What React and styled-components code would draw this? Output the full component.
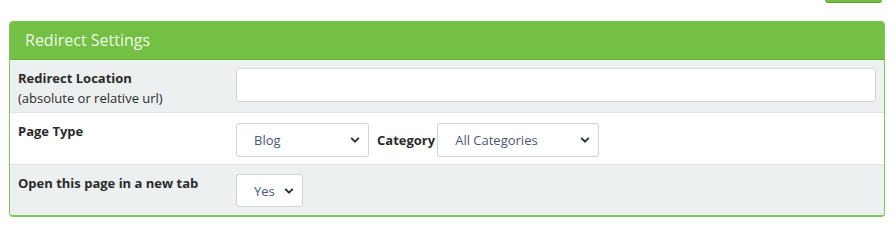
import React, { useState } from 'react';
import styled, { createGlobalStyle } from 'styled-components';

const GlobalStyle = createGlobalStyle`
  body {
    margin: 0;
    background: #fff;
    font-family: 'Open Sans', 'Liberation Sans', sans-serif;
  }
`;

const Page = styled.div`
  width: 893px;
`;

const TopBar = styled.div`
  display: flex;
  justify-content: flex-end;
  padding-right: 11px;
  height: 3px;
  overflow: hidden;
`;

const SaveStub = styled.div`
  width: 57px;
  height: 3px;
  background: #74c044;
  border-bottom: 1px solid #5fa334;
  border-radius: 0 0 3px 3px;
  box-sizing: border-box;
`;

const Panel = styled.div`
  margin: 18px 8px 0 9px;
  border: 1px solid #7cc95a;
  border-bottom-width: 2px;
  border-radius: 4px;
  overflow: hidden;
`;

const PanelHeader = styled.div`
  background: #74c044;
  color: #eef8e8;
  font-size: 16px;
  height: 37px;
  line-height: 37px;
  padding-left: 15px;
  border-bottom: 1px solid #66ae3a;
`;

const Row = styled.div`
  display: grid;
  grid-template-columns: 218px 1fr;
  align-items: start;
  padding: ${(p) => p.$pad};
  height: ${(p) => p.$height}px;
  box-sizing: border-box;
  background: ${(p) => (p.$shaded ? '#ecf0f1' : '#fff')};
  border-bottom: ${(p) => (p.$last ? 'none' : '1px solid #dfe3e5')};
`;

const Label = styled.div`
  font-size: 13px;
  line-height: 19px;
  color: #2b2b2b;
  font-weight: 700;
  padding-top: ${(p) => p.$top || 0}px;

  small {
    display: block;
    font-weight: 400;
    font-size: 13px;
    line-height: 20px;
  }
`;

const TextInput = styled.input`
  box-sizing: border-box;
  width: 100%;
  height: 34px;
  border: 1px solid #cfd4d6;
  border-radius: 3px;
  background: #fff;
  outline: none;
  font: inherit;
  font-size: 13px;
  padding: 0 10px;
`;

const Fields = styled.div`
  display: flex;
  align-items: center;
  gap: 4px;
  margin-top: ${(p) => p.$top || 0}px;
`;

const SelectWrap = styled.div`
  position: relative;
  width: ${(p) => p.$width}px;
  height: ${(p) => p.$height || 34}px;

  svg {
    position: absolute;
    right: 9px;
    top: 50%;
    transform: translateY(-50%);
    pointer-events: none;
  }
`;

const Select = styled.select`
  appearance: none;
  box-sizing: border-box;
  width: 100%;
  height: 100%;
  border: 1px solid #cfd4d6;
  border-radius: 3px;
  background: #fff;
  font-family: 'Open Sans', 'Liberation Sans', sans-serif;
  font-size: 13px;
  color: #4d5874;
  padding: 0 0 0 ${(p) => p.$padLeft || 17}px;
  outline: none;
`;

const InlineLabel = styled.span`
  font-size: 13px;
  font-weight: 700;
  color: #2b2b2b;
  margin: 0 -2px 0 4px;
`;

const Chevron = () => (
  <svg width="10" height="7" viewBox="0 0 10 7">
    <path d="M1.2 1.4 L5 5.2 L8.8 1.4" fill="none" stroke="#2c3345" strokeWidth="2" />
  </svg>
);

const Dropdown = ({ width, height, value, onChange, options, padLeft }) => (
  <SelectWrap $width={width} $height={height}>
    <Select value={value} onChange={(e) => onChange(e.target.value)} $padLeft={padLeft}>
      {options.map((o) => (
        <option key={o}>{o}</option>
      ))}
    </Select>
    <Chevron />
  </SelectWrap>
);

const App = () => {
  const [location, setLocation] = useState('');
  const [pageType, setPageType] = useState('Blog');
  const [category, setCategory] = useState('All Categories');
  const [newTab, setNewTab] = useState('Yes');

  return (
    <Page>
      <GlobalStyle />
      <TopBar>
        <SaveStub />
      </TopBar>
      <Panel>
        <PanelHeader>Redirect Settings</PanelHeader>
        <Row $shaded $height={53} $pad="8px 8px 0">
          <Label $top={1}>
            Redirect Location
            <small>(absolute or relative url)</small>
          </Label>
          <TextInput value={location} onChange={(e) => setLocation(e.target.value)} />
        </Row>
        <Row $height={52} $pad="9px 8px 0">
          <Label $top={0}>Page Type</Label>
          <Fields $top={1}>
            <Dropdown
              width={133}
              value={pageType}
              onChange={setPageType}
              options={['Blog', 'Page', 'Product']}
            />
            <InlineLabel>Category</InlineLabel>
            <Dropdown
              width={162}
              value={category}
              onChange={setCategory}
              options={['All Categories', 'News', 'Updates']}
            />
          </Fields>
        </Row>
        <Row $shaded $last $height={50} $pad="9px 8px 0">
          <Label $top={0}>Open this page in a new tab</Label>
          <Fields>
            <Dropdown
              width={67}
              height={33}
              value={newTab}
              onChange={setNewTab}
              options={['Yes', 'No']}
            />
          </Fields>
        </Row>
      </Panel>
    </Page>
  );
};

export default App;
